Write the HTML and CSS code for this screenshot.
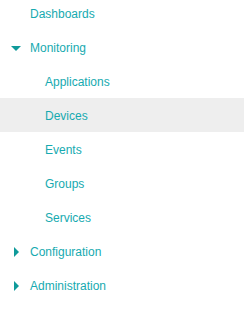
FILE: index.html
```html
<!DOCTYPE html>
<html lang="en">
<head>
    <meta charset="UTF-8">
    <title>Navigation</title>
    <link rel="stylesheet" href="styles.css">
</head>
<body>
    <ul class="nav">
        <li class="nav-item"><a class="nav-link">Dashboards</a></li>
        <li class="nav-item open">
            <a class="nav-link"><span class="caret down"></span>Monitoring</a>
            <ul class="sub-nav">
                <li><a class="sub-link">Applications</a></li>
                <li><a class="sub-link active">Devices</a></li>
                <li><a class="sub-link">Events</a></li>
                <li><a class="sub-link">Groups</a></li>
                <li><a class="sub-link">Services</a></li>
            </ul>
        </li>
        <li class="nav-item"><a class="nav-link"><span class="caret right"></span>Configuration</a></li>
        <li class="nav-item"><a class="nav-link"><span class="caret right"></span>Administration</a></li>
    </ul>
</body>
</html>
```

FILE: styles.css
```css
body {
    margin: 0;
    background: #fff;
    font-family: "Liberation Sans", Arial, sans-serif;
    font-size: 12px;
}
.nav, .sub-nav {
    list-style: none;
    margin: 0;
    padding: 0;
}
.nav {
    margin-top: -4px;
}
.nav-link, .sub-link {
    display: flex;
    align-items: center;
    box-sizing: border-box;
    height: 34px;
    padding-top: 2px;
    color: #16aab0;
    cursor: pointer;
}
.nav-link {
    padding-left: 30px;
    position: relative;
}
.sub-link {
    padding-left: 45px;
}
.sub-link.active {
    background: #eeeeee;
}
.caret {
    position: absolute;
    width: 0;
    height: 0;
}
.caret.down {
    left: 11px;
    top: 16px;
    border-left: 5px solid transparent;
    border-right: 5px solid transparent;
    border-top: 5px solid #0f9a9a;
}
.caret.right {
    left: 14px;
    top: 13px;
    border-top: 5px solid transparent;
    border-bottom: 5px solid transparent;
    border-left: 5px solid #0f9a9a;
}
```
